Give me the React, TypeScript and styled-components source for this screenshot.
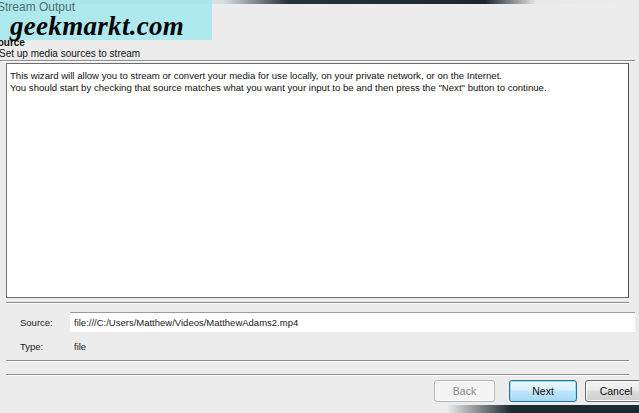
import styled, { createGlobalStyle } from 'styled-components';

const GlobalStyle = createGlobalStyle`
    html, body {
        margin: 0;
        padding: 0;
        background: #ececec;
    }
    body {
        font-family: "Liberation Sans", Arial, sans-serif;
        color: #111;
    }
`;

const Window = styled.div`
    position: relative;
    width: 639px;
    height: 413px;
    overflow: hidden;
    background: #ececec;
    display: flex;
    flex-direction: column;
`;

const TitleBar = styled.div`
    height: 14px;
    flex: none;
    background: linear-gradient(to right, #d9dfe1 0, #d9dfe1 35%, #27343b 45%, #1b272d 76%, #e9e9e9 84%, #ececec 100%);
    background-size: 100% 4px;
    background-repeat: no-repeat;
`;

const Header = styled.div`
    flex: none;
    height: 47px;
    box-sizing: border-box;
    display: flex;
    flex-direction: column;
    justify-content: flex-end;
    padding: 0 0 1px 0;
    border-bottom: 1px solid #8d8d8d;
    box-shadow: 0 1px 0 #ffffff;
    margin-right: 4px;
`;

const HeaderTitle = styled.div`
    font-size: 10px;
    font-weight: bold;
    line-height: 10px;
    text-indent: -9px;
`;

const HeaderSub = styled.div`
    font-size: 10px;
    line-height: 11px;
    text-indent: -1px;
`;

const Body = styled.div`
    flex: 1;
    display: flex;
    flex-direction: column;
    padding: 2px 10px 0 6px;
`;

const InfoBox = styled.div`
    height: 221px;
    background: #ffffff;
    border: 1px solid #6e6e6e;
    border-right-color: #505050;
    padding: 6px 3px;
    font-size: 9.6px;
    line-height: 12px;
    white-space: nowrap;
    overflow: hidden;
`;

const Divider = styled.div<{ $top: number; $bottom: number }>`
    height: 0;
    border-top: 1px solid #8c8c8c;
    border-bottom: 1px solid #ffffff;
    margin: ${(p) => `${p.$top}px 0 ${p.$bottom}px`};
`;

const FieldRow = styled.div<{ $h: number }>`
    display: grid;
    grid-template-columns: 50px 1fr;
    align-items: center;
    padding-left: 14px;
    height: ${(p) => p.$h}px;
    font-size: 9.5px;
`;

const Label = styled.span`
    color: #1a1a1a;
`;

const SourceInput = styled.div`
    height: 19px;
    line-height: 19px;
    background: #ffffff;
    border-top: 1px solid #9a9a9a;
    padding-left: 4px;
    margin-right: -6px;
    color: #202020;
`;

const Value = styled.span`
    padding-left: 4px;
    color: #202020;
`;

const ButtonRow = styled.div`
    display: flex;
    justify-content: flex-end;
    margin-right: -18px;
    padding-top: 4px;
`;

const Button = styled.div<{ $kind: 'disabled' | 'default' | 'normal'; $w: number; $gap: number }>`
    width: ${(p) => p.$w}px;
    margin-left: ${(p) => p.$gap}px;
    height: 22px;
    box-sizing: border-box;
    border-radius: 3px;
    display: flex;
    align-items: center;
    justify-content: center;
    font-size: 10.5px;
    border: 1px solid ${(p) => (p.$kind === 'default' ? '#2f6f95' : p.$kind === 'normal' ? '#6b6b6b' : '#b5b5b5')};
    color: ${(p) => (p.$kind === 'disabled' ? '#8a8a8a' : '#111')};
    background: ${(p) =>
        p.$kind === 'default'
            ? 'linear-gradient(#eaf6fd 0%, #d9f0fc 45%, #bee6fd 50%, #a7d9f5 100%)'
            : p.$kind === 'normal'
            ? 'linear-gradient(#f6f6f6 0%, #e9e9e9 45%, #dcdcdc 50%, #cfcfcf 100%)'
            : '#f4f4f4'};
    box-shadow: ${(p) => (p.$kind === 'default' ? 'inset 0 0 0 1px #8fe0f7' : 'inset 0 0 0 1px #fbfbfb')};
`;

const BottomFrame = styled.div`
    margin-top: auto;
    height: 8px;
    flex: none;
    background: linear-gradient(to right, #ececec 0, #ececec 70%, #1c2a31 80%, #1c2a31 100%);
`;

const Watermark = styled.div`
    position: absolute;
    left: 0;
    top: 0;
    width: 212px;
    height: 40px;
    background: rgba(150, 232, 238, 0.72);
    display: flex;
    flex-direction: column;
`;

const WatermarkTitle = styled.div`
    font-size: 12px;
    line-height: 13px;
    color: #4f6d72;
    text-indent: -3px;
    padding-top: 1px;
`;

const WatermarkText = styled.div`
    font-family: "Liberation Serif", "Times New Roman", serif;
    font-style: italic;
    font-weight: bold;
    font-size: 27px;
    line-height: 24px;
    color: #050505;
    padding-left: 10px;
    letter-spacing: 0.3px;
`;

export default function App() {
    return (
        <>
            <GlobalStyle />
            <Window>
                <TitleBar />
                <Header>
                    <HeaderTitle>Source</HeaderTitle>
                    <HeaderSub>Set up media sources to stream</HeaderSub>
                </Header>
                <Body>
                    <InfoBox>
                        This wizard will allow you to stream or convert your media for use locally, on your private network, or on the Internet.
                        <br />
                        You should start by checking that source matches what you want your input to be and then press the "Next" button to continue.
                    </InfoBox>
                    <Divider $top={4} $bottom={8} />
                    <FieldRow $h={20}>
                        <Label>Source:</Label>
                        <SourceInput>file:///C:/Users/Matthew/Videos/MatthewAdams2.mp4</SourceInput>
                    </FieldRow>
                    <FieldRow $h={28}>
                        <Label>Type:</Label>
                        <Value>file</Value>
                    </FieldRow>
                    <Divider $top={0} $bottom={12} />
                    <Divider $top={0} $bottom={0} />
                    <ButtonRow>
                        <Button $kind="disabled" $w={61} $gap={0}>Back</Button>
                        <Button $kind="default" $w={68} $gap={14}>Next</Button>
                        <Button $kind="normal" $w={62} $gap={8}>Cancel</Button>
                    </ButtonRow>
                </Body>
                <BottomFrame />
                <Watermark>
                    <WatermarkTitle>Stream Output</WatermarkTitle>
                    <WatermarkText>geekmarkt.com</WatermarkText>
                </Watermark>
            </Window>
        </>
    );
}
